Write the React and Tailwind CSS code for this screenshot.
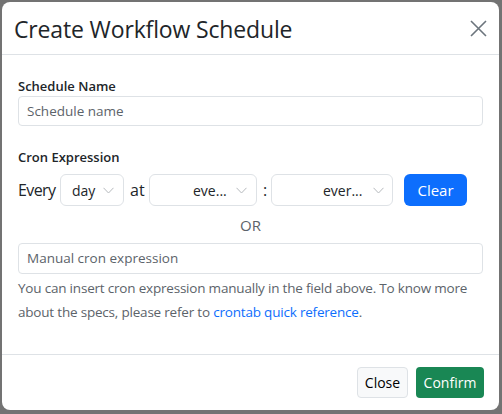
function Chevron() {
  return (
    <svg width="11" height="7" viewBox="0 0 11 7" fill="none" className="shrink-0">
      <path d="M0.5 0.8 L5.5 6 L10.5 0.8" stroke="#b5b9bd" strokeWidth="1" />
    </svg>
  );
}

function FakeSelect({ label, width, textClass }) {
  return (
    <div
      className={"h-[32px] shrink-0 border border-[#dee2e6] rounded-md flex items-center text-[14px] text-[#212529] " + width}
    >
      <span className={textClass}>{label}</span>
      <Chevron />
    </div>
  );
}

export default function App() {
  return (
    <div
      className="w-[502px] h-[414px] bg-[#737373] pl-[2px] pt-[2px] text-[#212529]"
      style={{ fontFamily: '"Open Sans", "Noto Sans", sans-serif' }}
    >
      <div className="w-[497px] h-[408px] bg-white rounded-lg flex flex-col overflow-hidden">
        {/* header */}
        <div className="h-[53px] shrink-0 pl-[12px] pr-[12px] flex items-center justify-between border-b border-[#dee2e6]">
          <h4 className="text-[23px] leading-none tracking-[-0.15px] mt-[3px]">Create Workflow Schedule</h4>
          <button type="button" className="w-[22px] h-[22px] flex items-center justify-center mr-[-2px]">
            <svg width="17" height="17" viewBox="0 0 17 17">
              <path d="M1 1 L16 16 M16 1 L1 16" stroke="#6c757d" strokeWidth="1.6" />
            </svg>
          </button>
        </div>

        {/* body */}
        <div className="flex-1 px-4 pt-[21px]">
          <label className="block text-[13px] font-semibold leading-[20px]">Schedule Name</label>
          <div className="h-[30px] border border-[#dee2e6] rounded-[4px] flex items-center px-2 text-[13.5px] text-[#5c636a]">
            Schedule name
          </div>

          <label className="block text-[13px] font-semibold leading-[20px] mt-[21px]">Cron Expression</label>
          <div className="flex items-center mt-[7px] text-[16px]">
            <span className="w-[36px] shrink-0 tracking-[-0.6px]">Every</span>
            <FakeSelect label="day" width="w-[64px] ml-[6px]" textClass="ml-[11px] w-[31px]" />
            <span className="ml-[6px] w-[14px] shrink-0">at</span>
            <FakeSelect label="eve..." width="w-[108px] ml-[5px]" textClass="ml-[43px] w-[43px]" />
            <span className="ml-[6px] w-[4px] shrink-0">:</span>
            <FakeSelect label="ever..." width="w-[122px] ml-[4px]" textClass="ml-[51px] w-[50px]" />
            <button
              type="button"
              className="ml-[11px] w-[63px] h-[32px] shrink-0 rounded-md bg-[#0d6efd] text-white text-[15px]"
            >
              Clear
            </button>
          </div>

          <div className="text-center text-[15px] text-[#5c636a] leading-[22px] mt-[8px]">OR</div>

          <div className="mt-[7px] h-[31px] border border-[#dee2e6] rounded-[4px] flex items-center px-2 text-[13.5px] text-[#5c636a]">
            Manual cron expression
          </div>
          <p className="mt-[2px] text-[13.5px] leading-[24px] text-[#5c636a] tracking-[-0.2px]">
            You can insert cron expression manually in the field above. To know more about the specs, please refer to{" "}
            <a href="#" className="text-[#0d6efd]">crontab quick reference</a>.
          </p>
        </div>

        {/* footer */}
        <div className="h-[56px] shrink-0 border-t border-[#dee2e6] flex items-center justify-end gap-[8px] pr-[15px]">
          <button
            type="button"
            className="w-[51px] h-[31px] rounded-[4px] bg-[#f8f9fa] border border-[#dee2e6] text-[14px] text-black"
          >
            Close
          </button>
          <button
            type="button"
            className="w-[68px] h-[31px] rounded-[4px] bg-[#198754] text-white text-[14px]"
          >
            Confirm
          </button>
        </div>
      </div>
    </div>
  );
}
